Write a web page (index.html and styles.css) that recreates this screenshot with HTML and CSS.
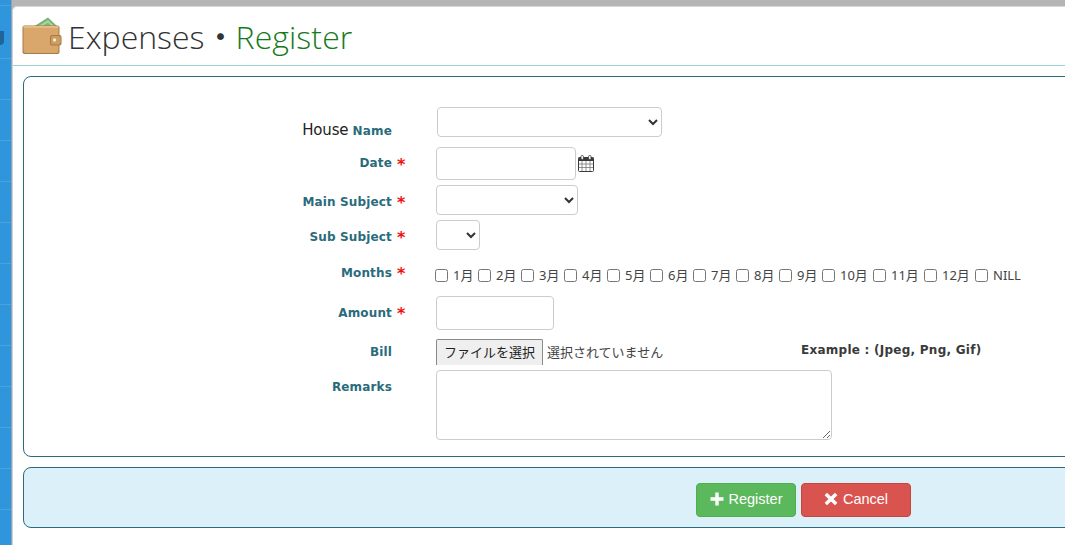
FILE: index.html
```html
<!DOCTYPE html>
<html lang="ja">
<head>
<meta charset="utf-8">
<title>Expenses - Register</title>
<link rel="stylesheet" href="styles.css">
</head>
<body>
<div class="app">
  <aside class="sidebar"><span class="side-icon"></span></aside>
  <main class="main">
    <header class="page-head">
      <svg class="wallet" viewBox="0 0 40 38" width="40" height="38" aria-hidden="true">
        <path d="M11 10 L26 0.500 L36 10 Z" fill="#79b274"/>
        <path d="M15 10 L26 3 L33 10 Z" fill="#a9d69f"/>
        <path d="M19 10 L26 5.500 L30 10 Z" fill="#7fb97b"/>
        <rect x="0.500" y="8.500" width="37" height="28.500" rx="2" fill="#a97a45"/>
        <rect x="1.500" y="9" width="35" height="27" rx="2" fill="#d9a66b"/>
        <rect x="1.500" y="9" width="35" height="2" fill="#e6bb85"/>
        <rect x="28" y="18" width="11.500" height="10.500" rx="2" fill="#a97a45"/>
        <rect x="29" y="19" width="9.500" height="8.500" rx="1.500" fill="#cf9c60"/>
        <circle cx="32.500" cy="23" r="1.700" fill="#f5ead2"/>
      </svg>
      <h1 class="title">Expenses<span class="dot">・</span><span class="title-accent">Register</span></h1>
    </header>
    <div class="content">
      <form class="panel">
        <div class="row row-house">
          <div class="lbl"><span class="plain">House</span> Name</div>
          <div class="star"></div>
          <select class="field sel-house"></select>
        </div>
        <div class="row row-date">
          <div class="lbl">Date</div>
          <div class="star">*</div>
          <input class="field in-date" type="text">
          <svg class="cal" viewBox="0 0 16 17" width="16" height="17" aria-hidden="true">
            <rect x="0.5" y="2.5" width="15" height="14" rx="1" fill="#fff" stroke="#3a3a3a"/>
            <rect x="0.5" y="2.5" width="15" height="3.5" fill="#3a3a3a"/>
            <rect x="3" y="0.5" width="2.4" height="4" rx="1" fill="#fff" stroke="#3a3a3a" stroke-width=".8"/>
            <rect x="10.6" y="0.5" width="2.4" height="4" rx="1" fill="#fff" stroke="#3a3a3a" stroke-width=".8"/>
            <path d="M4 6v10M8 6v10M12 6v10M1 9h14M1 12.500h14" stroke="#777" stroke-width=".8" fill="none"/>
          </svg>
        </div>
        <div class="row row-main">
          <div class="lbl">Main Subject</div>
          <div class="star">*</div>
          <select class="field sel-main"></select>
        </div>
        <div class="row row-sub">
          <div class="lbl">Sub Subject</div>
          <div class="star">*</div>
          <select class="field sel-sub"></select>
        </div>
        <div class="row row-months">
          <div class="lbl">Months</div>
          <div class="star">*</div>
          <div class="months">
            <label class="month"><input type="checkbox">1月</label>
            <label class="month"><input type="checkbox">2月</label>
            <label class="month"><input type="checkbox">3月</label>
            <label class="month"><input type="checkbox">4月</label>
            <label class="month"><input type="checkbox">5月</label>
            <label class="month"><input type="checkbox">6月</label>
            <label class="month"><input type="checkbox">7月</label>
            <label class="month"><input type="checkbox">8月</label>
            <label class="month"><input type="checkbox">9月</label>
            <label class="month wide"><input type="checkbox">10月</label>
            <label class="month wide"><input type="checkbox">11月</label>
            <label class="month wide"><input type="checkbox">12月</label>
            <label class="month"><input type="checkbox">NILL</label>
          </div>
        </div>
        <div class="row row-amount">
          <div class="lbl">Amount</div>
          <div class="star">*</div>
          <input class="field in-amount" type="text">
        </div>
        <div class="row row-bill">
          <div class="lbl">Bill</div>
          <div class="star"></div>
          <div class="file">
            <button class="file-btn" type="button">ファイルを選択</button>
            <span class="file-none">選択されていません</span>
          </div>
          <div class="example">Example : (Jpeg, Png, Gif)</div>
        </div>
        <div class="row row-remarks">
          <div class="lbl">Remarks</div>
          <div class="star"></div>
          <textarea class="field remarks"></textarea>
        </div>
      </form>
      <div class="actions">
        <button class="btn btn-ok" type="button">
          <svg viewBox="0 0 14 14" width="14" height="14" aria-hidden="true"><path d="M5.300 0.500h3.400v4.800h4.800v3.400H8.700v4.800H5.300V8.700H0.500V5.300h4.800z" fill="#fff"/></svg>
          Register
        </button>
        <button class="btn btn-no" type="button">
          <svg viewBox="0 0 14 14" width="14" height="14" aria-hidden="true"><path d="M3 0.800L7 4.600l4-3.800 2.400 2.400L9.500 7l3.900 3.800-2.400 2.400L7 9.400l-4 3.800-2.400-2.400L4.500 7 0.600 3.200z" fill="#fff"/></svg>
          Cancel
        </button>
      </div>
    </div>
  </main>
</div>
</body>
</html>
```
FILE: styles.css
```css
* { box-sizing: border-box; }
html, body { margin: 0; height: 100%; overflow: hidden; background: #fff; }
body { font-family: "Liberation Sans", "Noto Sans CJK JP", sans-serif; color: #333; }

.app { display: flex; width: 1065px; height: 545px; overflow: hidden; background: #b5b5b5; }

.sidebar {
  flex: 0 0 12px;
  position: relative;
  background-color: #2f95dc;
  background-image: repeating-linear-gradient(to bottom, #2f95dc 0, #2f95dc 40px, #4aa2e0 40px, #4aa2e0 41px);
  background-position: 0 18px;
  border-right: 1px solid #8fa3b0;
}
.side-icon {
  position: absolute;
  left: 0; top: 31px;
  width: 4px; height: 14px;
  background: #1f659c;
  border-radius: 0 0 4px 0;
}

.main {
  flex: 0 0 auto;
  width: 1053px;
  margin-top: 6px;
  border-left: 1px solid #c9d3da;
  display: flex;
  flex-direction: column;
  background: #fff;
  border-top: 1px solid #d8d8d8;
  border-top-left-radius: 5px;
}

.page-head {
  height: 59px;
  display: flex;
  align-items: center;
  padding: 0 0 0 9px;
  gap: 6px;
  border-bottom: 1px solid #9ad2d6;
}
.wallet { flex: none; margin-top: -1px; }
.title {
  margin: -1px 0 0;
  font-family: "Open Sans", "Noto Sans CJK JP", sans-serif;
  font-weight: 300;
  font-size: 32px;
  line-height: 40px;
  color: #333;
  white-space: nowrap;
}
.dot { font-family: "Noto Sans CJK JP", sans-serif; font-weight: 400; }
.title-accent { color: #157a1c; font-weight: 300; letter-spacing: 0.1px; margin-left: -1px; }

.content { padding: 10px 0 0 10px; width: 1200px; }

.panel {
  height: 381px;
  border: 1px solid #2a6b7c;
  border-radius: 8px;
  padding-top: 30px;
  display: flex;
  flex-direction: column;
  background: #fff;
}

.row {
  display: grid;
  grid-template-columns: 368px 44px auto;
  justify-content: start;
  align-items: start;
}

.lbl {
  text-align: right;
  font-family: "DejaVu Sans", sans-serif;
  font-weight: 700;
  font-size: 12px;
  line-height: 16px;
  letter-spacing: 0.15px;
  color: #2a6b7c;
  white-space: nowrap;
}
.plain { font-weight: 400; font-size: 15px; color: #222; letter-spacing: -0.2px; }
.star {
  padding-left: 5px;
  color: #e11;
  font-weight: 700;
  font-size: 16px;
  line-height: 16px;
  font-family: "DejaVu Sans", sans-serif;
}

.field {
  display: block;
  border: 1px solid #ccc;
  border-radius: 4px;
  background: #fff;
  margin: 0;
}
select.field { color: #333; font-size: 13px; }

.row-house { height: 40px; }
.row-house .lbl { padding-top: 15px; }
.sel-house { width: 225px; height: 30px; margin-left: 1px; }

.row-date { height: 38px; grid-template-columns: 368px 44px auto auto; }
.row-date .lbl { padding-top: 8px; }
.row-date .star { padding-top: 10px; }
.in-date { width: 140px; height: 33px; }
.cal { margin: 8px 0 0 2px; }

.row-main { height: 35px; }
.row-main .lbl { padding-top: 9px; }
.row-main .star { padding-top: 10px; }
.sel-main { width: 142px; height: 30px; }

.row-sub { height: 45px; }
.row-sub .lbl { padding-top: 9px; }
.row-sub .star { padding-top: 10px; }
.sel-sub { width: 44px; height: 30px; }

.row-months { height: 31px; }
.row-months .star { padding-top: 1px; }
.months { display: flex; padding-top: 3px; margin-left: -1px; }
.month {
  display: flex;
  align-items: center;
  width: 43px;
  font-family: "Noto Sans", "Noto Sans CJK JP", sans-serif;
  font-size: 13px;
  line-height: 14px;
  color: #444;
  white-space: nowrap;
}
.month.wide { width: 51px; }
.month input { margin: 0 5px 0 0; width: 13px; height: 13px; flex: none; }

.row-amount { height: 43px; }
.row-amount .lbl { padding-top: 9px; }
.row-amount .star { padding-top: 10px; }
.in-amount { width: 118px; height: 34px; }

.row-bill { height: 31px; grid-template-columns: 368px 44px 365px auto; }
.row-bill .lbl { padding-top: 5px; }
.file { display: flex; align-items: center; height: 26px; }
.file-btn {
  height: 26px;
  width: 107px;
  padding: 0 0 2px;
  border: 1px solid #8a8a8a;
  border-bottom: 0;
  border-radius: 2px 2px 0 0;
  background: #efefef;
  color: #222;
  font-family: "Noto Sans CJK JP", sans-serif;
  font-size: 13px;
}
.file-none {
  margin: 0 0 2px 4px;
  font-family: "Noto Sans CJK JP", sans-serif;
  font-size: 13px;
  color: #444;
  white-space: nowrap;
}
.example {
  padding-top: 3px;
  font-family: "DejaVu Sans", sans-serif;
  font-weight: 700;
  font-size: 12px;
  line-height: 16px;
  letter-spacing: 0.25px;
  color: #3a3a3a;
  white-space: nowrap;
}

.row-remarks .lbl { padding-top: 9px; }
.remarks { width: 396px; height: 70px; resize: both; }

.actions {
  margin-top: 10px;
  height: 61px;
  border: 1px solid #2a6b7c;
  border-radius: 8px;
  background: #dcf0fa;
  display: flex;
  gap: 5px;
  padding: 15px 0 0 672px;
}
.btn {
  height: 34px;
  display: flex;
  align-items: center;
  justify-content: center;
  gap: 5px;
  border-radius: 4px;
  border: 1px solid;
  color: #fff;
  font-family: "Liberation Sans", sans-serif;
  font-size: 14.5px;
  padding: 0 0 2px;
}
.btn-ok { width: 100px; background: #5cb85c; border-color: #4cae4c; }
.btn-no { width: 110px; background: #d9534f; border-color: #c9433f; }
```
